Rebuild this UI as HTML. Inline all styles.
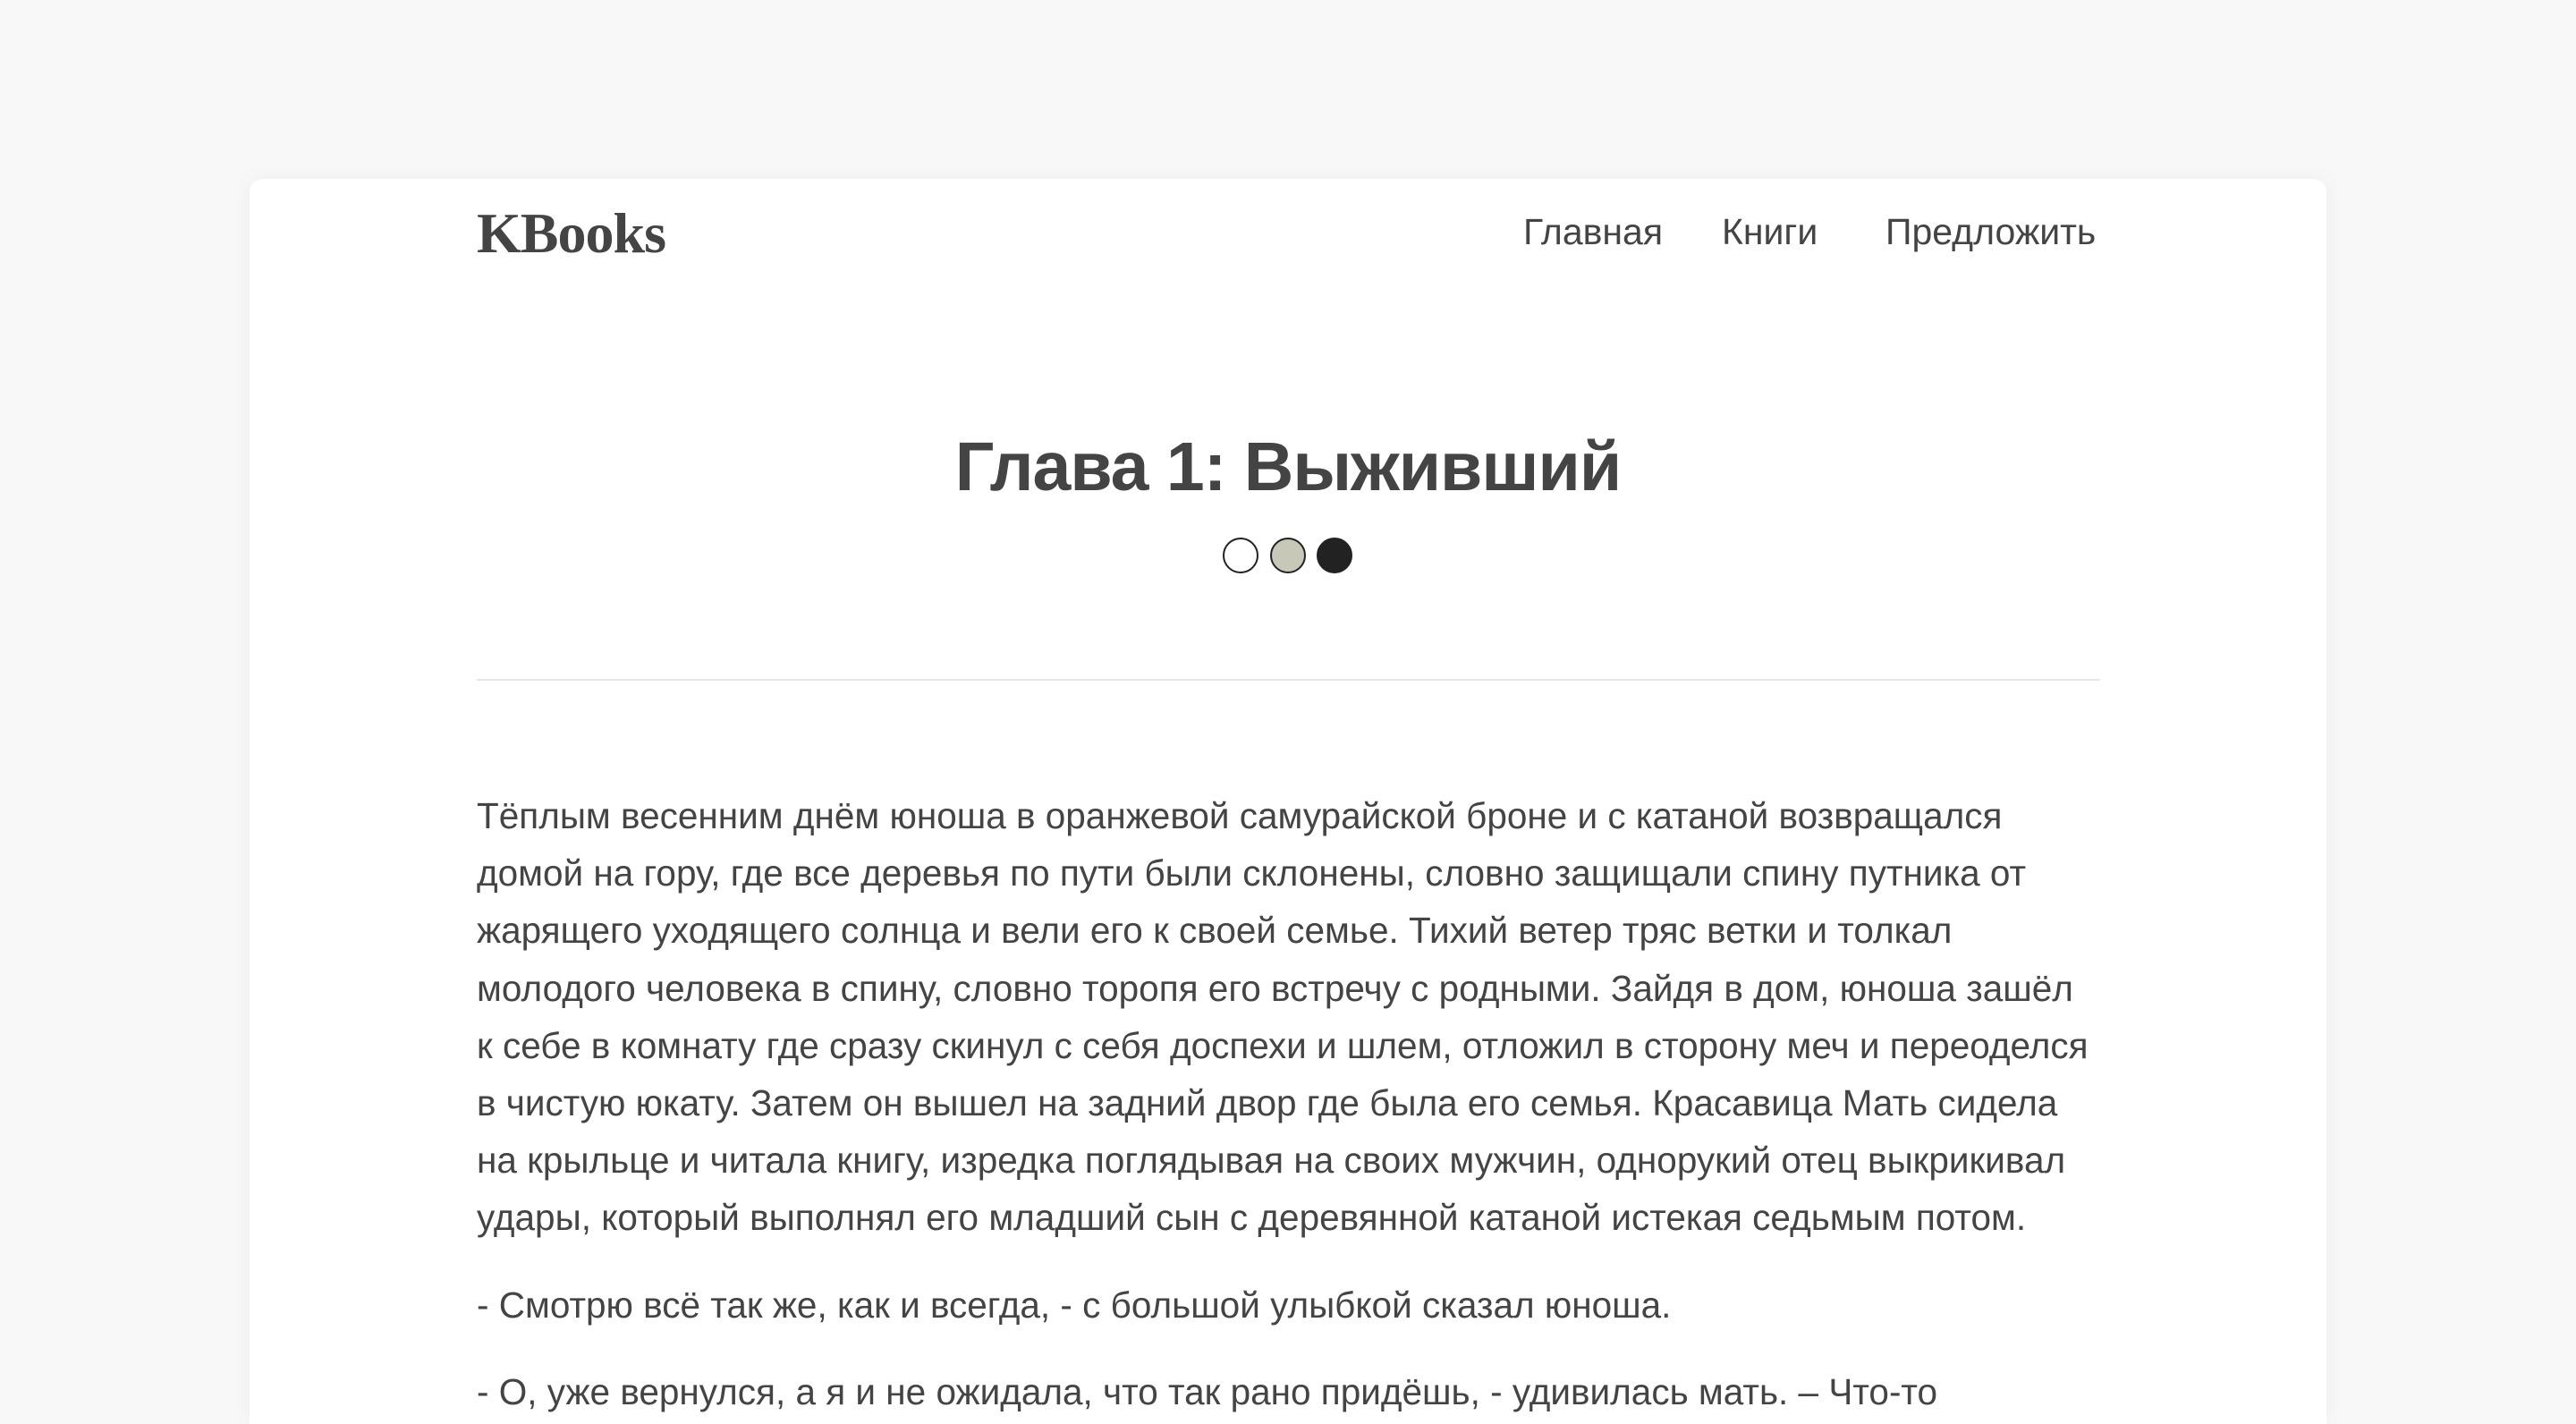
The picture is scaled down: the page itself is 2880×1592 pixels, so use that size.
<!DOCTYPE html>
<html><head><meta charset="utf-8"><style>
html,body{margin:0;padding:0;background:#f8f8f8;width:2880px;height:1592px;overflow:hidden;position:relative}
.card{position:absolute;left:279px;top:200px;width:2322px;height:1392px;background:#fff;border-radius:14px 14px 0 0;box-shadow:0 0 24px rgba(0,0,0,0.05)}
.logo{position:absolute;left:533px;top:224px;font-family:"Liberation Serif",serif;font-weight:bold;font-size:64px;color:#444;letter-spacing:-1px}
.nav{position:absolute;top:236px;font-family:"Liberation Sans",sans-serif;font-size:41px;color:#444}
h1{position:absolute;left:0;width:2880px;top:478px;margin:0;text-align:center;font-family:"Liberation Sans",sans-serif;font-weight:bold;font-size:77px;color:#444;letter-spacing:-1px}
.dot{position:absolute;top:601px;width:36px;height:36px;border-radius:50%;border:2px solid #222}
hr{position:absolute;left:533px;top:759px;width:1815px;margin:0;border:0;border-top:2px solid #e6e6e6}
.txt{position:absolute;left:533px;top:880px;font-family:"Liberation Sans",sans-serif;font-size:40.5px;color:#444;line-height:64.2px;white-space:nowrap}
.txt p{margin:0 0 33px}
</style></head><body>
<div class="card"></div>
<div class="logo">KBooks</div>
<div class="nav" style="left:1703px">Главная</div>
<div class="nav" style="left:1925px">Книги</div>
<div class="nav" style="left:2108px">Предложить</div>
<h1>Глава 1: Выживший</h1>
<div class="dot" style="left:1367px;background:#fff"></div>
<div class="dot" style="left:1420px;background:#c8c8b8"></div>
<div class="dot" style="left:1472px;background:#222"></div>
<hr>
<div class="txt">
<p>Тёплым весенним днём юноша в оранжевой самурайской броне и с катаной возвращался<br>домой на гору, где все деревья по пути были склонены, словно защищали спину путника от<br>жарящего уходящего солнца и вели его к своей семье. Тихий ветер тряс ветки и толкал<br>молодого человека в спину, словно торопя его встречу с родными. Зайдя в дом, юноша зашёл<br>к себе в комнату где сразу скинул с себя доспехи и шлем, отложил в сторону меч и переоделся<br>в чистую юкату. Затем он вышел на задний двор где была его семья. Красавица Мать сидела<br>на крыльце и читала книгу, изредка поглядывая на своих мужчин, однорукий отец выкрикивал<br>удары, который выполнял его младший сын с деревянной катаной истекая седьмым потом.</p>
<p>- Смотрю всё так же, как и всегда, - с большой улыбкой сказал юноша.</p>
<p>- О, уже вернулся, а я и не ожидала, что так рано придёшь, - удивилась мать. – Что-то</p>
</div>
</body></html>
